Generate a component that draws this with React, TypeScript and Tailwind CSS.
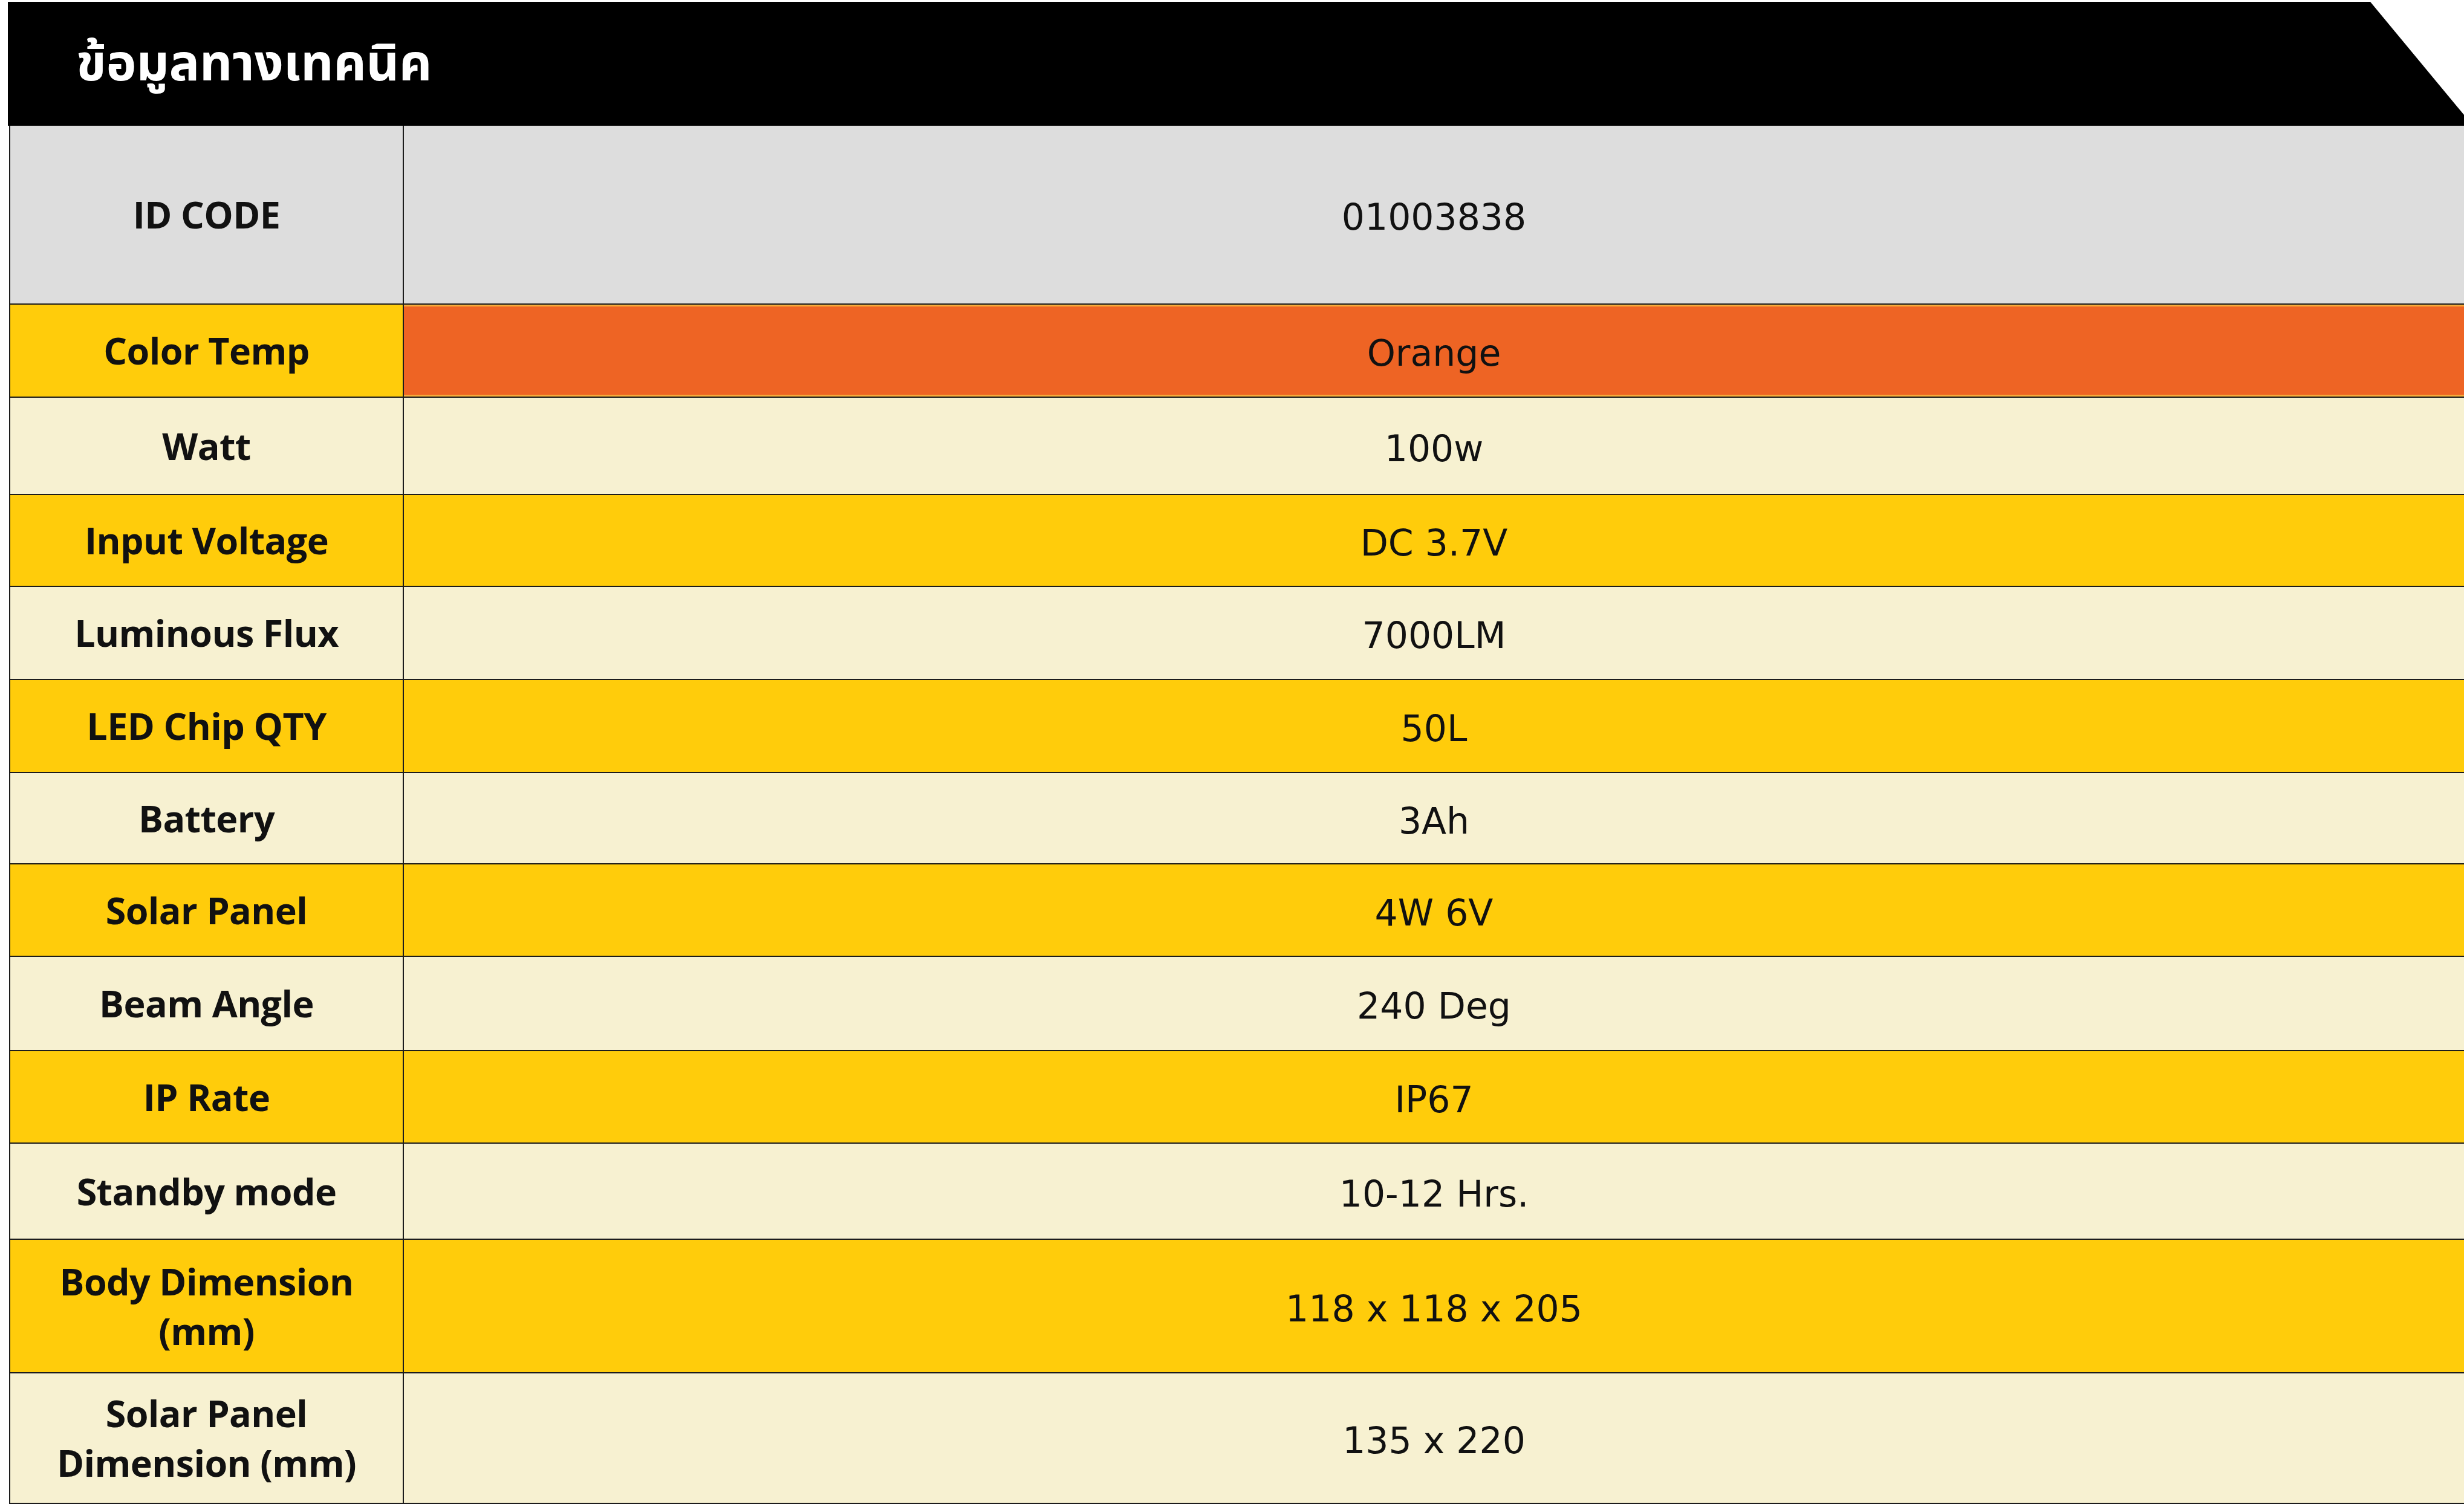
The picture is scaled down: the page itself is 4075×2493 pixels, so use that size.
type Row = {
  label: string[];
  value: string;
  h: string;
  bg: string;
  valueBg?: string;
};

const GRAY = "bg-[#dddddd]";
const YELLOW = "bg-[#ffcc0b]";
const CREAM = "bg-[#f7f1d1]";

const rows: Row[] = [
  { label: ["ID CODE"], value: "01003838", h: "h-[296px]", bg: GRAY },
  { label: ["Color Temp"], value: "Orange", h: "h-[154px]", bg: YELLOW, valueBg: "bg-[#ee6424] border-y-[3px] border-[#f6ab3a]" },
  { label: ["Watt"], value: "100w", h: "h-[161px]", bg: CREAM },
  { label: ["Input Voltage"], value: "DC 3.7V", h: "h-[152px]", bg: YELLOW },
  { label: ["Luminous Flux"], value: "7000LM", h: "h-[154px]", bg: CREAM },
  { label: ["LED Chip QTY"], value: "50L", h: "h-[154px]", bg: YELLOW },
  { label: ["Battery"], value: "3Ah", h: "h-[151px]", bg: CREAM },
  { label: ["Solar Panel"], value: "4W 6V", h: "h-[153px]", bg: YELLOW },
  { label: ["Beam Angle"], value: "240 Deg", h: "h-[156px]", bg: CREAM },
  { label: ["IP Rate"], value: "IP67", h: "h-[153px]", bg: YELLOW },
  { label: ["Standby mode"], value: "10-12 Hrs.", h: "h-[159px]", bg: CREAM },
  { label: ["Body Dimension", "(mm)"], value: "118 x 118 x 205", h: "h-[221px]", bg: YELLOW },
  { label: ["Solar Panel", "Dimension (mm)"], value: "135 x 220", h: "h-[216px]", bg: CREAM },
];

function SpecRow({ row }: { row: Row }) {
  return (
    <div className={`flex border-b-2 border-[#1c1c1c] ${row.h}`}>
      <div
        className={`w-[651px] shrink-0 border-r-2 border-[#1c1c1c] flex flex-col items-center justify-center text-center ${row.bg}`}
      >
        {row.label.map((line) => (
          <span
            key={line}
            className="font-['Open_Sans',sans-serif] font-bold text-[61px] leading-[82px] tracking-[-0.01em] text-[#111]"
          >
            {line}
          </span>
        ))}
      </div>
      <div
        className={`flex-1 flex items-center justify-center ${row.valueBg ?? row.bg}`}
      >
        <span className="font-['DejaVu_Sans',sans-serif] text-[60px] leading-none text-[#111] pt-[8px]">
          {row.value}
        </span>
      </div>
    </div>
  );
}

export default function App() {
  return (
    <div className="min-h-screen bg-white pt-[3px]">
      {/* black title bar with the clipped top-right corner */}
      <div className="ml-[13px] h-[205px] bg-black flex items-center pl-[113px] pt-[4px] [clip-path:polygon(0_0,calc(100%_-_155px)_0,100%_187px,100%_100%,0_100%)]">
        <h1 className="font-['Noto_Sans_Thai','Noto_Sans',Tahoma,sans-serif] font-bold text-[84px] leading-none text-white">
          ข้อมูลทางเทคนิค
        </h1>
      </div>

      <div className="ml-[15px] border-l-2 border-[#1c1c1c]">
        {rows.map((row) => (
          <SpecRow key={row.value} row={row} />
        ))}
      </div>
    </div>
  );
}
